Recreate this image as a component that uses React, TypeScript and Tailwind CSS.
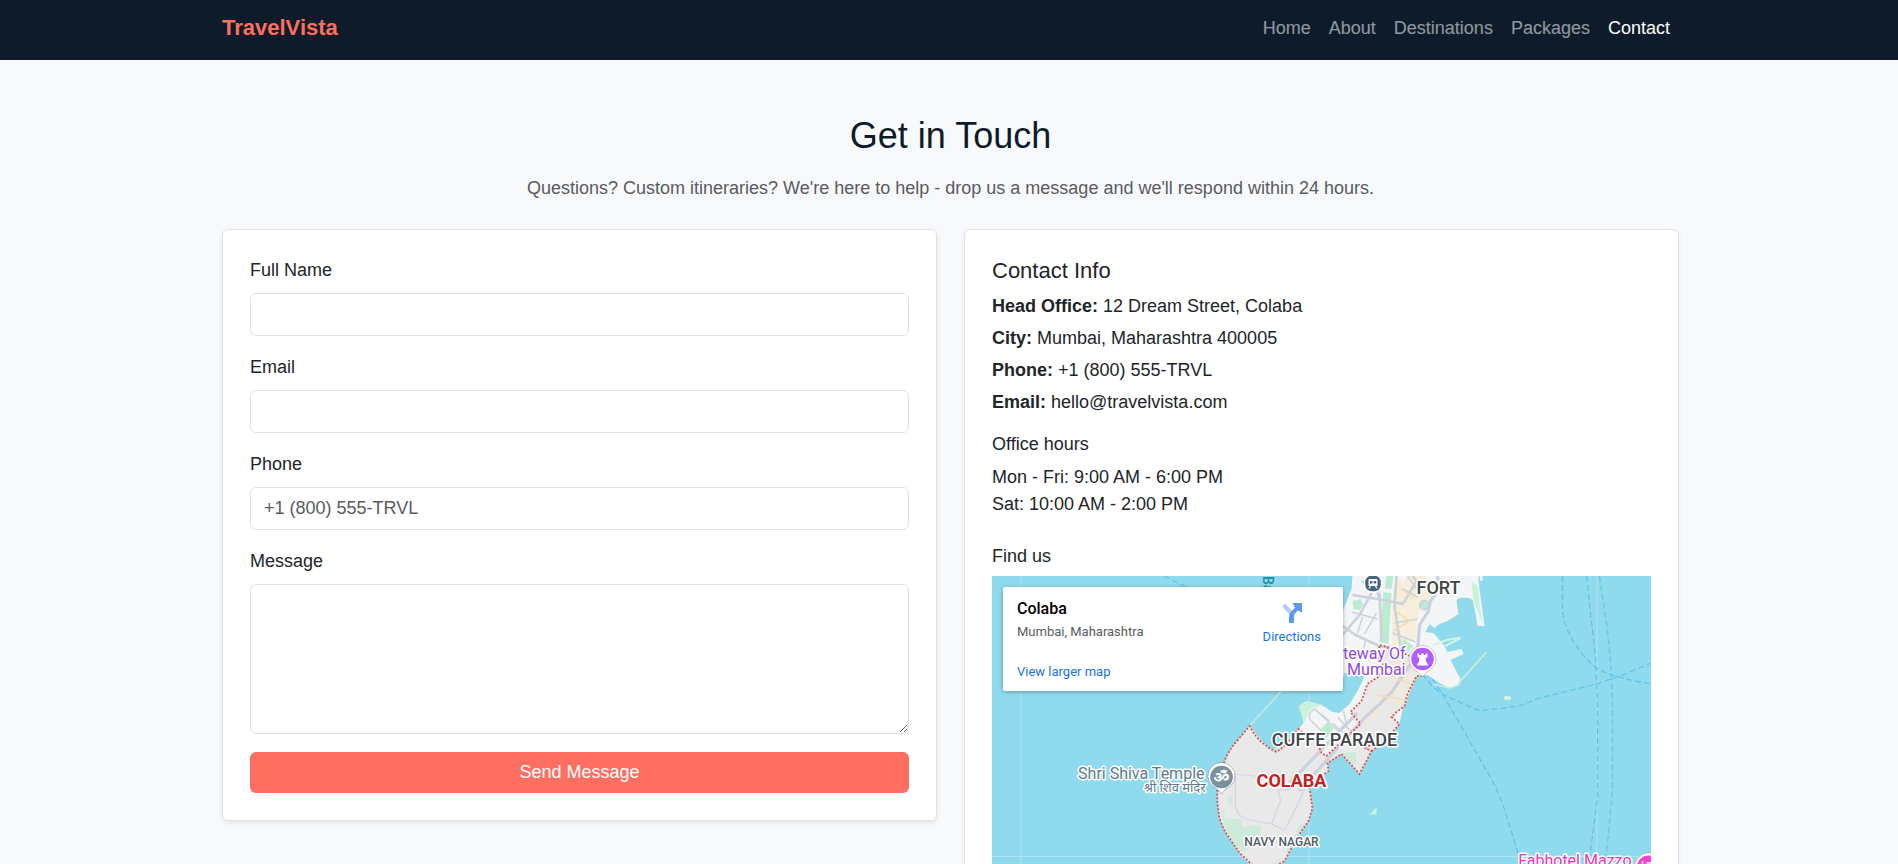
import React from 'react'

const navItems = [
  { href: '#home', label: 'Home' },
  { href: '#about', label: 'About' },
  { href: '#destinations', label: 'Destinations' },
  { href: '#packages', label: 'Packages' },
  { href: '#contact', label: 'Contact', active: true },
]

const contactInfo = [
  { label: 'Head Office:', value: '12 Dream Street, Colaba' },
  { label: 'City:', value: 'Mumbai, Maharashtra 400005' },
  { label: 'Phone:', value: '+1 (800) 555-TRVL' },
  { label: 'Email:', value: 'hello@travelvista.com' },
]

const inputClass =
  'block w-full rounded-md border border-[#dee2e6] bg-white px-[13px] text-[#212529] placeholder:text-[#595c5f] focus:border-[#ff6f61] focus:outline-none'

function Navbar() {
  return (
    <nav className="bg-[#0d1b2a]">
      <div className="mx-auto flex h-[60px] max-w-[1484px] items-center justify-between pb-1 pl-[15px] pr-3">
        <a href="#home" className="text-[22px] font-bold leading-[34px] text-[#ff6f61]">
          TravelVista
        </a>
        <ul className="flex">
          {navItems.map(item => (
            <li key={item.label}>
              <a
                href={item.href}
                className={`px-[9px] ${item.active ? 'text-white' : 'text-white/55 hover:text-white/75'}`}
              >
                {item.label}
              </a>
            </li>
          ))}
        </ul>
      </div>
    </nav>
  )
}

function ContactForm() {
  return (
    <form
      className="rounded-md border border-[#dee2e6] bg-white p-[27px] shadow-[0_2px_4px_rgba(0,0,0,0.075)]"
      onSubmit={e => e.preventDefault()}
    >
      <div className="mb-[18px]">
        <label htmlFor="name" className="mb-[9px] block">Full Name</label>
        <input id="name" type="text" className={`${inputClass} h-[43px]`} />
      </div>
      <div className="mb-[18px]">
        <label htmlFor="email" className="mb-[9px] block">Email</label>
        <input id="email" type="email" className={`${inputClass} h-[43px]`} />
      </div>
      <div className="mb-[18px]">
        <label htmlFor="phone" className="mb-[9px] block">Phone</label>
        <input id="phone" type="tel" placeholder="+1 (800) 555-TRVL" className={`${inputClass} h-[43px]`} />
      </div>
      <div className="mb-[18px]">
        <label htmlFor="message" className="mb-[9px] block">Message</label>
        <textarea id="message" className={`${inputClass} h-[150px] resize-y py-[7px]`} />
      </div>
      <button type="submit" className="block h-[41px] w-full rounded-md bg-[#ff6f61] text-white">
        Send Message
      </button>
    </form>
  )
}

function MapDrawing() {
  return (
    <svg
      viewBox="992 575 660 338"
      preserveAspectRatio="xMidYMin slice"
      className="block h-full w-full font-[Roboto,'Noto_Sans',sans-serif]"
      role="img"
      aria-label="Map of Colaba, Mumbai"
    >
      <rect x="992" y="575" width="660" height="338" fill="#90daee" />

      {/* tile seams */}
      <path d="M1021.5 575V913M1309.5 575V913M1597.5 575V913M992 855.5H1652" stroke="#fff" strokeOpacity=".3" fill="none" />

      {/* ferry routes */}
      <g fill="none" stroke="#5cc3e3" strokeWidth="1.2" strokeDasharray="6 3">
        <path d="M1165 575L1186 586L1200 593" />
        <path d="M1563 575V610Q1564 622 1570 633Q1577 647 1587 658Q1596 668 1607 672Q1628 679 1652 683" />
        <path d="M1587 575L1596 657L1598 700V797L1591 850L1588 880" />
        <path d="M1600 575L1608 630L1611 660L1613 700V790L1607 853L1604 880" strokeWidth="1.6" strokeOpacity=".7" />
        <path d="M1423 673L1432 684Q1440 692 1447 695L1473 707Q1480 710 1487 709L1520 705L1540 697L1597 683L1623 674L1652 662" />
        <path d="M1428 671L1443 693L1458 719L1493 780Q1504 803 1507 815L1520 857L1526 880" />
      </g>

      {/* mainland */}
      <path
        d="M1353 575L1352 588L1346 603L1340 618L1325 672H1366L1363 680L1358 690L1350 703L1340 712L1333 711L1327 707L1322 704L1307 700L1300 705L1303 715L1304 722L1299 728L1322 758L1342 750L1400 722L1404 705L1417 675L1428 674L1440 682L1450 687L1458 685L1461 678L1451 659L1464 653L1462 648L1448 651L1445 645L1434 632L1426 631L1430 623L1435 627L1440 623L1448 620L1459 613L1457 600Q1459 596 1464 597Q1470 596 1473 599L1476 612L1478 625H1485L1479 580V575Z"
        fill="#f4f5f6"
      />
      <path d="M1299 705L1307 700L1322 704L1310 709L1305 722L1302 714Z" fill="#c9f2d9" />
      <path d="M1434 683L1450 687L1459 684L1461 680L1487 651" stroke="#c9f0dc" strokeWidth="1.5" fill="none" />
      <path d="M1434 644L1447 639L1461 636.500M1446 645L1461 637" stroke="#d5f3e2" strokeWidth="2" fill="none" />
      <path d="M1472 580L1479 586L1480 605L1484 624L1479 612L1474 600Z" fill="#c9f2d9" />
      <path d="M1472 575V580H1475V575ZM1480 575L1481 580H1483V575Z" fill="#f4f5f6" />

      {/* built-up blocks */}
      <path d="M1402 585L1408 575H1425L1434 585L1430 597L1421 605L1417 622L1415 640L1404 640L1393 648L1392 606Z" fill="#f7eedb" />
      <path d="M1394 588L1402 578L1403 602L1394 604Z" fill="#f9ecd5" />

      {/* Colaba district */}
      <path
        d="M1250 725L1267 745L1277 751L1285 745L1292 734L1299 728L1318 742L1322 752L1327 755L1361 723L1351 711L1362 700L1368 683L1380 675L1384 664L1380 645L1390 647L1417 675L1413 682L1405 705L1392 716L1400 723L1393 732L1386 742L1372 750L1360 773L1342 753L1328 762L1329 770L1318 778L1310 787L1313 807L1309 820L1300 833L1292 847L1285 860Q1278 868 1262 868Q1249 864 1240 852L1227 833L1220 817L1218 795L1221 775L1224 763L1232 747Z"
        fill="#e9e9ea"
      />
      <path d="M1392 652L1416 658L1417 675L1405 705L1386 700L1378 707L1370 716L1366 712L1380 696L1392 680Z" fill="#efe9df" />
      <path d="M1366 720L1376 708L1380 712L1370 722Z" fill="#f4e9d5" />

      {/* parks */}
      <g fill="#bcecd0">
        <path d="M1387 575H1394L1392 588H1385Z" />
        <path d="M1384 591L1392 592L1389 643L1380 641Z" />
        <path d="M1353 600L1361 598L1364 604L1360 609L1354 608Z" />
        <path d="M1404 638L1414 645L1408 652L1402 645Z" />
        <path d="M1320 729L1328 721L1334 727L1325 740Z" />
        <circle cx="1425" cy="604" r="4" />
      </g>
      <g fill="#cdebdb">
        <path d="M1228 795L1233 794V804L1229 804Z" />
        <path d="M1221 808L1226 810L1225 818H1241L1243 826L1261 824V838L1250 846L1245 851L1240 850L1227 832Z" />
        <path d="M1306 822L1300 824L1294 836L1288 844L1286 858L1262 866L1280 866L1292 846L1303 830Z" />
        <path d="M1344 752L1356 751L1357 761L1352 764Z" />
        <path d="M1275 748L1282 743L1286 746L1278 751Z" />
      </g>
      <ellipse cx="1508" cy="697" rx="3.500" ry="2.200" fill="#cdf3dc" />
      <path d="M1370 814L1377 806V813Z" fill="#cdf3dc" />
      <path d="M1282 690L1250 725" stroke="#cfeedd" strokeWidth="1.200" />

      {/* roads */}
      <g fill="none" stroke="#c9d2dd" strokeLinejoin="round">
        <path d="M1353 594L1384 599L1404 603M1343 634L1360 614L1366 603L1371 594L1378 575M1380 592L1382 640M1397 575L1395 605L1401 645M1404 602L1417 580L1413 575M1380 575L1378 590L1380 600M1343 625L1356 634L1380 645L1402 648" strokeWidth="2.600" />
        <path d="M1438 575L1440 588L1431 600L1429 610L1420 624L1418 650M1417 655L1405 672L1393 690L1380 703L1365 717L1352 731L1300 790M1358 712L1340 730L1290 782" strokeWidth="3.200" />
        <path d="M1352 611L1378 618M1362 580L1380 590M1363 616L1358 632M1395 622L1418 618M1393 632L1416 641M1403 588L1418 596M1408 575L1420 592M1365 633L1377 612" strokeWidth="1.500" />
        <path d="M1310 712L1315 708L1330 720M1310 718L1321 729M1310 712V718M1315 708L1340 731M1338 716L1352 731M1333 722L1346 734M1344 710L1347 724M1366 640L1360 662L1352 668" strokeWidth="1.400" />
        <path d="M1235 773L1255 775L1285 779M1236 775V806Q1238 816 1250 819L1272 823L1285 829L1295 810L1309 780M1272 823L1281 800L1279 789L1292 788" stroke="#ccd6e6" strokeWidth="1.200" />
        <circle cx="1425" cy="604" r="4.500" strokeWidth="2" />
      </g>
      <path d="M1402 588L1414 597M1396 610L1410 620L1394 630M1376 694L1388 696L1406 699M1398 678L1410 682M1402 668L1398 680" stroke="#f3ddba" strokeWidth="1.500" fill="none" />

      {/* district boundary */}
      <g fill="none" stroke="#e8483c" strokeWidth="1.800" strokeDasharray="1.800 1.900">
        <path d="M1390 651L1388 646L1380 644L1379 656L1384 664L1380 675L1368 683L1362 700L1351 711L1361 723L1327 755L1322 752L1318 742L1299 728L1292 737L1285 745L1277 751Q1270 748 1267 745Q1257 738 1250 725L1240 737Q1228 750 1224 763L1218 785Q1217 803 1220 817Q1223 827 1227 833L1240 852L1253 864Q1266 872 1285 860L1292 847L1300 833L1309 820L1313 807L1310 787L1318 778L1329 770L1328 762L1342 753L1360 773L1372 750L1366 747L1371 744L1366 737" />
        <path d="M1372 750L1386 740L1394 730L1400 723L1392 716L1397 711L1405 705L1408 693L1417 675H1424M1402 651L1412 656" />
      </g>

      {/* place names */}
      <g stroke="#fff" strokeWidth="3" strokeLinejoin="round" paintOrder="stroke">
        <text x="1439" y="593" textAnchor="middle" fontSize="18" fontWeight="500" fill="#3f4448">FORT</text>
        <text x="1335" y="745" textAnchor="middle" fontSize="18" fontWeight="500" fill="#3f4448">CUFFE PARADE</text>
        <text x="1292" y="786" textAnchor="middle" fontSize="18" fontWeight="700" fill="#c5221f">COLABA</text>
        <text x="1282" y="845" textAnchor="middle" fontSize="12" fontWeight="500" fill="#4f5b66">NAVY NAGAR</text>
        <text x="1406" y="658" textAnchor="end" fontSize="16" fill="#8d4bdb">Gateway Of</text>
        <text x="1406" y="674" textAnchor="end" fontSize="16" fill="#8d4bdb">India Mumbai</text>
        <text x="1205" y="778" textAnchor="end" fontSize="16" fill="#5d7b8a">Shri Shiva Temple</text>
        <text x="1206" y="791" textAnchor="end" fontSize="13" fill="#5d7b8a">श्री शिव मंदिर</text>
        <text x="1632" y="865" textAnchor="end" fontSize="16" fill="#e636c0">Fabhotel Mazzo</text>
      </g>
      <text transform="translate(1263 575) rotate(90)" fontSize="14" fontWeight="500" fill="#1f8fa3">Back Bay</text>

      {/* station marker */}
      <rect x="1365" y="574" width="17" height="17" rx="7" fill="#48637c" stroke="#fff" strokeWidth="1.500" />
      <path d="M1370 578H1377Q1378 578 1378 579V585H1369V579Q1369 578 1370 578Z" fill="#fff" />
      <path d="M1370.500 580H1373V582.500H1370.500ZM1374.200 580H1376.700V582.500H1374.200Z" fill="#48637c" />
      <path d="M1371 585L1369.500 587.500M1376 585L1377.500 587.500" stroke="#fff" strokeWidth="1.200" />

      {/* gateway pin */}
      <path d="M1423 676Q1420 671 1414 668A13.500 13.500 0 1 1 1432 668Q1426 671 1423 676Z" fill="#fff" stroke="#8c8c8c" strokeOpacity=".45" />
      <circle cx="1423" cy="658" r="11.300" fill="#b15dff" />
      <path d="M1418 652.500H1419.800V654H1421.800V652.500H1424.200V654H1426.200V652.500H1428V656.500H1426L1426.500 660.500L1428.500 663.500V664.500H1417.500V663.500L1419.500 660.500L1420 656.500H1418Z" fill="#fff" />

      {/* temple pin */}
      <path d="M1222 793Q1219 788 1213 785A13.500 13.500 0 1 1 1231 785Q1225 788 1222 793Z" fill="#fff" stroke="#6b6b6b" strokeOpacity=".45" />
      <circle cx="1222" cy="776" r="11.300" fill="#78919d" />
      <text x="1222" y="782" textAnchor="middle" fontSize="16" fontWeight="700" fill="#fff">ॐ</text>

      {/* hotel pin */}
      <circle cx="1649" cy="866" r="14" fill="#fff" stroke="#8c8c8c" strokeOpacity=".4" />
      <circle cx="1649" cy="866" r="11.500" fill="#f545cd" />
      <path d="M1643 860V871M1643 867H1655V871M1647 862H1655V867" stroke="#fff" strokeWidth="1.600" fill="none" />
    </svg>
  )
}

function MapCard() {
  return (
    <div className="relative h-[338px] overflow-hidden font-[Roboto,sans-serif]">
      <MapDrawing />
      <div className="absolute left-[11px] top-[11px] flex h-[104px] w-[340px] justify-between rounded-[2px] bg-white pl-[14px] pr-[22px] shadow-[0_1px_4px_rgba(0,0,0,0.3)]">
        <div className="flex flex-col pt-[11px] text-[13px]">
          <span className="text-base font-medium leading-[22px] text-black">Colaba</span>
          <span className="mt-[2px] leading-5 text-[#5b5b5b]">Mumbai, Maharashtra</span>
          <a href="#map" className="mt-5 leading-5 text-[#1a73e8]">View larger map</a>
        </div>
        <a href="#directions" className="flex flex-col items-center pt-4 text-[13px] text-[#1a73e8]">
          <svg viewBox="0 0 20 20" className="h-5 w-5" aria-hidden="true">
            <path d="M0 3.500L3 .5L11 8.500L8 12Z" fill="#b3cff5" />
            <path d="M7 20V14Q7 10.500 9.500 8.200L13 4.700L10.500 0H20V9.500L15.800 7.500L13 10.400Q12 11.500 12 13.500V20Z" fill="#5f9ae8" />
          </svg>
          <span className="mt-1 leading-5">Directions</span>
        </a>
      </div>
    </div>
  )
}

function InfoCard() {
  return (
    <div className="rounded-md border border-[#dee2e6] bg-white p-[27px] shadow-[0_2px_4px_rgba(0,0,0,0.075)]">
      <h2 className="mb-[9px] text-[22px] leading-[27px]">Contact Info</h2>
      <div className="flex flex-col gap-[5px]">
        {contactInfo.map(item => (
          <p key={item.label}>
            <strong>{item.label}</strong> {item.value}
          </p>
        ))}
      </div>
      <h3 className="mb-[9px] mt-[17px] leading-[22px]">Office hours</h3>
      <p>
        Mon - Fri: 9:00 AM - 6:00 PM
        <br />
        Sat: 10:00 AM - 2:00 PM
      </p>
      <h3 className="mb-[9px] mt-[27px] leading-[22px]">Find us</h3>
      <MapCard />
    </div>
  )
}

export default function App() {
  return (
    <div className="min-h-screen bg-[#f8f9fb] font-['Liberation_Sans',Arial,sans-serif] text-[18px] leading-[27px] text-[#212529]">
      <Navbar />
      <main className="mx-auto max-w-[1484px] py-[54px] pl-[15px] pr-3">
        <header className="mb-[27px] text-center">
          <h1 className="mb-[18px] text-4xl leading-[43px] text-[#0d1b2a]">Get in Touch</h1>
          <p className="text-[#585b5f]">
            Questions? Custom itineraries? We're here to help - drop us a message and we'll respond within 24 hours.
          </p>
        </header>
        <div className="grid grid-cols-1 items-start gap-[27px] lg:grid-cols-2">
          <ContactForm />
          <InfoCard />
        </div>
      </main>
    </div>
  )
}
